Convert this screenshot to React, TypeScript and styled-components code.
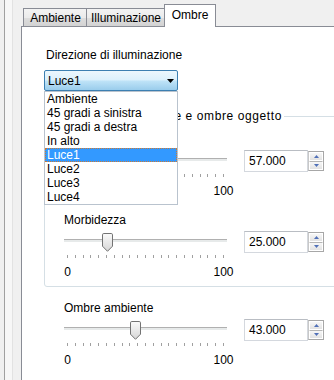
import React from "react";
import styled, { createGlobalStyle } from "styled-components";

const GlobalStyle = createGlobalStyle`
  html, body { margin: 0; padding: 0; background: #f0f0f0; overflow: hidden; }
  body { font-family: "Liberation Sans", Arial, sans-serif; font-size: 12px; color: #000; }
  * { box-sizing: border-box; }
`;

const Window = styled.div`
  display: flex;
  width: 334px;
  height: 380px;
  overflow: hidden;
  background: #f0f0f0;
`;

const Gutter = styled.div`
  flex: none;
  width: 9px;
  margin-left: 4px;
  border-left: 1px solid #a0a0a0;
  border-right: 1px solid #e2e2e2;
  background: #f7f7f7;
`;

const TabControl = styled.div`
  flex: none;
  display: flex;
  flex-direction: column;
  width: 420px;
  margin-left: 8px;
`;

const TabStrip = styled.div`
  display: flex;
  align-items: flex-end;
  height: 26px;
  padding-left: 2px;
`;

const Tab = styled.div<{ $active?: boolean; $width: number }>`
  position: relative;
  display: flex;
  align-items: center;
  justify-content: center;
  flex: none;
  width: ${(p) => p.$width}px;
  border: 1px solid #898c95;
  border-bottom: none;
  white-space: nowrap;
  height: ${(p) => (p.$active ? "23px" : "18px")};
  padding-bottom: ${(p) => (p.$active ? "2px" : "0")};
  margin-bottom: ${(p) => (p.$active ? "-1px" : "0")};
  z-index: ${(p) => (p.$active ? 2 : 1)};
  background: ${(p) =>
    p.$active
      ? "#ffffff"
      : "linear-gradient(to bottom, #f3f3f3 0%, #ebebeb 50%, #dddddd 51%, #d3d3d3 100%)"};
  & + & {
    margin-left: ${(p) => (p.$active ? "-2px" : "1px")};
  }
`;

const Panel = styled.div`
  flex: 1;
  background: #ffffff;
  border-top: 1px solid #898c95;
  border-left: 1px solid #898c95;
  padding: 21px 0 0 22px;
`;

const FieldLabel = styled.div`
  height: 14px;
  line-height: 14px;
  margin-left: 2px;
  white-space: nowrap;
`;

const ComboWrap = styled.div`
  position: relative;
  width: 134px;
  margin-top: 8px;
`;

const ComboBox = styled.div`
  display: flex;
  align-items: center;
  justify-content: space-between;
  height: 21px;
  padding: 0 3px 0 3px;
  border: 1px solid #3c7fb1;
  border-radius: 2px;
  background: linear-gradient(to bottom, #ecf7fd 0%, #dcf1fc 45%, #bde2f7 55%, #9acdec 100%);
`;

const DropList = styled.ul`
  position: absolute;
  top: 21px;
  left: 0;
  width: 134px;
  margin: 0;
  padding: 0;
  list-style: none;
  background: #ffffff;
  border: 1px solid #b9c3ce;
  z-index: 10;
`;

const DropItem = styled.li<{ $selected?: boolean }>`
  height: 14px;
  line-height: 14px;
  padding-left: 2px;
  white-space: nowrap;
  background: ${(p) => (p.$selected ? "#3399ff" : "transparent")};
  color: ${(p) => (p.$selected ? "#ffffff" : "#000000")};
  outline: ${(p) => (p.$selected ? "1px dotted #cc7a33" : "none")};
  outline-offset: -1px;
`;

const GroupBox = styled.fieldset`
  margin: 18px 0 0 0;
  padding: 9px 0 7px 0;
  width: 360px;
  min-width: 0;
  border: 1px solid #d5dfe5;
  border-radius: 3px;
`;

const GroupTitle = styled.legend`
  margin-left: auto;
  margin-right: 119px;
  padding: 0 2px;
  height: 14px;
  line-height: 14px;
  white-space: nowrap;
  letter-spacing: 0.6px;
`;

const GroupBody = styled.div`
  display: flex;
  flex-direction: column;
  gap: 15px;
  padding-left: 19px;
`;

const Section = styled.div<{ $outside?: boolean }>`
  display: flex;
  flex-direction: column;
  margin: ${(p) => (p.$outside ? "14px 0 0 20px" : "0")};
`;

const SectionLabel = styled.div`
  height: 14px;
  line-height: 14px;
  white-space: nowrap;
`;

const ControlRow = styled.div`
  display: flex;
  align-items: flex-start;
  margin-top: 4px;
`;

const SliderColumn = styled.div`
  display: flex;
  flex-direction: column;
  width: 163px;
`;

const TrackArea = styled.div`
  position: relative;
  height: 21px;
`;

const Track = styled.div`
  margin-top: 8px;
  height: 3px;
  border-top: 1px solid #b0b0b0;
  background: #e7eaea;
`;

const ThumbWrap = styled.div`
  position: absolute;
  top: 2px;
  width: 11px;
  height: 19px;
  line-height: 0;
`;

const TickRow = styled.div`
  display: flex;
  justify-content: space-between;
  height: 3px;
  margin-top: 3px;
  padding: 0 3px 0 3px;
`;

const Tick = styled.span`
  width: 1px;
  height: 3px;
  background: #a0a0a0;
`;

const ScaleRow = styled.div`
  display: flex;
  justify-content: space-between;
  margin-top: 7px;
  padding: 0 3px 0 3px;
  height: 14px;
  line-height: 14px;
`;

const ScaleLabel = styled.span`
  display: flex;
  justify-content: center;
  width: 1px;
  white-space: nowrap;
`;

const SpinBox = styled.div`
  display: flex;
  align-items: center;
  margin-left: 17px;
  height: 22px;
`;

const SpinInput = styled.div`
  width: 64px;
  height: 22px;
  line-height: 20px;
  padding-left: 4px;
  border: 1px solid #d4d8de;
  border-top-color: #b9bdc3;
  background: #ffffff;
`;

const SpinButtons = styled.div`
  display: flex;
  flex-direction: column;
  width: 16px;
  height: 20px;
  border: 1px solid #a7a7a7;
  border-left-color: #c8c8c8;
`;

const SpinButton = styled.div`
  flex: 1;
  display: flex;
  align-items: center;
  justify-content: center;
  background: linear-gradient(to bottom, #f7f7f7, #e2e2e2);
  border: 1px solid #ffffff;
  & + & {
    border-top: 1px solid #b5b5b5;
  }
`;

const ArrowDown = () => (
  <svg width="7" height="4" viewBox="0 0 7 4">
    <polygon points="0,0 7,0 3.5,4" fill="#000" />
  </svg>
);

const SpinArrow = ({ up }: { up?: boolean }) => (
  <svg width="5" height="3" viewBox="0 0 5 3">
    <polygon points={up ? "0,3 2.5,0 5,3" : "0,0 5,0 2.5,3"} fill="#5070b8" />
  </svg>
);

const Thumb = () => (
  <svg width="11" height="19" viewBox="0 0 11 19">
    <defs>
      <linearGradient id="thumbFill" x1="0" y1="0" x2="0" y2="1">
        <stop offset="0" stopColor="#fbfbfb" />
        <stop offset="1" stopColor="#d6d6d6" />
      </linearGradient>
    </defs>
    <path
      d="M1.8 0.5 H9.2 Q10.5 0.5 10.5 1.8 V13.2 L5.5 18.3 L0.5 13.2 V1.8 Q0.5 0.5 1.8 0.5 Z"
      fill="url(#thumbFill)"
      stroke="#737373"
    />
  </svg>
);

type SliderProps = { label: string; value: number; outside?: boolean };

const SliderSection = ({ label, value, outside }: SliderProps) => (
  <Section $outside={outside}>
    <SectionLabel>{label}</SectionLabel>
    <ControlRow>
      <SliderColumn>
        <TrackArea>
          <Track />
          <ThumbWrap style={{ left: Math.round(value * 1.56 - 1) }}>
            <Thumb />
          </ThumbWrap>
        </TrackArea>
        <TickRow>
          {Array.from({ length: 21 }).map((_, i) => (
            <Tick key={i} />
          ))}
        </TickRow>
        <ScaleRow>
          <ScaleLabel>0</ScaleLabel>
          <ScaleLabel>100</ScaleLabel>
        </ScaleRow>
      </SliderColumn>
      <SpinBox>
        <SpinInput>{value.toFixed(3)}</SpinInput>
        <SpinButtons>
          <SpinButton>
            <SpinArrow up />
          </SpinButton>
          <SpinButton>
            <SpinArrow />
          </SpinButton>
        </SpinButtons>
      </SpinBox>
    </ControlRow>
  </Section>
);

const options = [
  "Ambiente",
  "45 gradi a sinistra",
  "45 gradi a destra",
  "In alto",
  "Luce1",
  "Luce2",
  "Luce3",
  "Luce4",
];

export default function App() {
  return (
    <>
      <GlobalStyle />
      <Window>
        <Gutter />
        <TabControl>
          <TabStrip>
            <Tab $width={65}>Ambiente</Tab>
            <Tab $width={80}>Illuminazione</Tab>
            <Tab $width={52} $active>
              Ombre
            </Tab>
          </TabStrip>
          <Panel>
            <FieldLabel>Direzione di illuminazione</FieldLabel>
            <ComboWrap>
              <ComboBox>
                <span>Luce1</span>
                <ArrowDown />
              </ComboBox>
              <DropList>
                {options.map((o) => (
                  <DropItem key={o} $selected={o === "Luce1"}>
                    {o}
                  </DropItem>
                ))}
              </DropList>
            </ComboWrap>
            <GroupBox>
              <GroupTitle>Intensità della luce e ombre oggetto</GroupTitle>
              <GroupBody>
                <SliderSection label="Intensità" value={57} />
                <SliderSection label="Morbidezza" value={25} />
              </GroupBody>
            </GroupBox>
            <SliderSection label="Ombre ambiente" value={43} outside />
          </Panel>
        </TabControl>
      </Window>
    </>
  );
}
